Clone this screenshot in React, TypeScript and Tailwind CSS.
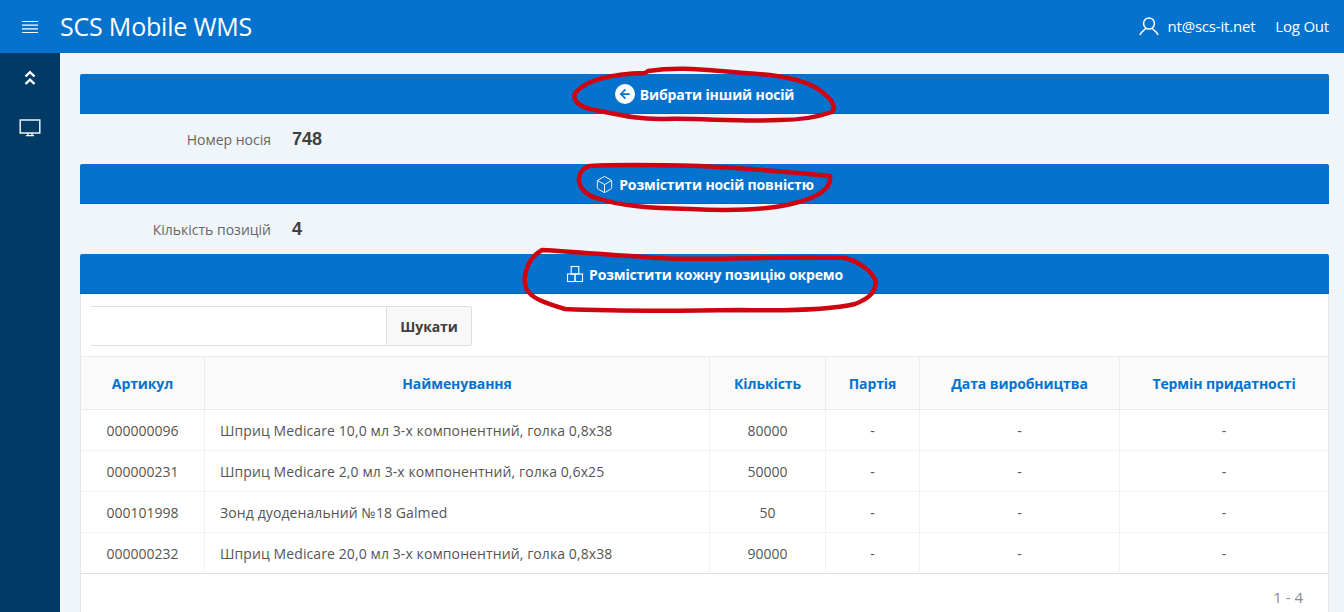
import { ArrowLeft, Box } from "lucide-react";

const ROWS = [
  { code: "000000096", name: "Шприц Medicare 10,0 мл 3-х компонентний, голка 0,8x38", qty: "80000" },
  { code: "000000231", name: "Шприц Medicare 2,0 мл 3-х компонентний, голка 0,6x25", qty: "50000" },
  { code: "000101998", name: "Зонд дуоденальний №18 Galmed", qty: "50" },
  { code: "000000232", name: "Шприц Medicare 20,0 мл 3-х компонентний, голка 0,8x38", qty: "90000" },
];

const HEADERS = [
  { label: "Артикул", w: "w-[123.5px]" },
  { label: "Найменування", w: "w-[505px]" },
  { label: "Кількість", w: "w-[116px]" },
  { label: "Партія", w: "w-[94px]" },
  { label: "Дата виробництва", w: "w-[200px]" },
  { label: "Термін придатності", w: "" },
];

function BlueBar({ icon, label }: { icon: React.ReactNode; label: string }) {
  return (
    <button className="flex h-10 w-full items-center justify-center gap-[5px] rounded-t-[2px] bg-[#0572ce] text-[14px] font-bold tracking-[-0.15px] text-white shadow-[inset_0_-1px_0_rgba(0,0,0,0.12)]">
      {icon}
      <span className="pt-[1px]">{label}</span>
    </button>
  );
}

function InfoRow({ label, value }: { label: string; value: string }) {
  return (
    <div className="flex h-[50px] items-center">
      <div className="w-[191px] text-right text-[14px] text-[#666]">{label}</div>
      <div className="ml-[21px] text-[18px] font-bold text-[#404040] [font-family:'Liberation_Sans',sans-serif]">{value}</div>
    </div>
  );
}

function HamburgerIcon() {
  return (
    <svg width="16" height="14" viewBox="0 0 16 14" fill="none" stroke="currentColor" strokeWidth="1.2">
      <path d="M0 1.5H16M0 5.2H16M0 8.9H16M0 12.5H16" />
    </svg>
  );
}

function UserIcon() {
  return (
    <svg width="20" height="19" viewBox="0 0 20 19" fill="none" stroke="currentColor" strokeWidth="1.5">
      <ellipse cx="10" cy="6.5" rx="5.4" ry="5.6" />
      <path d="M6.8 11C6.5 13.2 2 13.6 1 18M13.2 11C13.5 13.2 18 13.6 19 18" />
    </svg>
  );
}

function DoubleChevronIcon() {
  return (
    <svg width="12" height="16" viewBox="0 0 12 16" fill="none" stroke="currentColor" strokeWidth="2.4">
      <path d="M1.5 6.5L6 2.2L10.5 6.5M1.5 14L6 9.7L10.5 14" />
    </svg>
  );
}

function MonitorIcon() {
  return (
    <svg width="22" height="18" viewBox="0 0 22 18" fill="none" stroke="currentColor" strokeWidth="1.4">
      <rect x="1.2" y="1" width="19.6" height="13" />
      <path d="M7 16.6H15M9 14V16.6M13 14V16.6" />
    </svg>
  );
}

function BlocksIcon() {
  return (
    <svg width="18" height="18" viewBox="0 0 18 18" fill="none" stroke="currentColor" strokeWidth="1.1">
      <rect x="5.2" y="1.5" width="7.6" height="7.5" />
      <rect x="1.5" y="9" width="7.5" height="7.5" />
      <rect x="9" y="9" width="7.5" height="7.5" />
    </svg>
  );
}

export default function App() {
  return (
    <div className="relative flex h-[612px] flex-col overflow-hidden bg-[#f0f5fa] text-[14px] [font-family:'Open_Sans','Noto_Sans',sans-serif]">
      <header className="flex h-[53px] shrink-0 items-center bg-[#0572ce] text-white">
        <div className="flex w-[60px] justify-center">
          <HamburgerIcon />
        </div>
        <div className="text-[25px] leading-none tracking-[-0.2px]">SCS Mobile WMS</div>
        <div className="ml-auto flex items-center pr-[15px] text-[15px] tracking-[-0.2px]">
          <UserIcon />
          <span className="ml-[9px]">nt@scs-it.net</span>
          <span className="ml-[20px]">Log Out</span>
        </div>
      </header>

      <div className="flex min-h-0 flex-1">
        <aside className="flex w-[60px] shrink-0 flex-col items-center bg-[#023a66] pt-[17px] text-white">
          <DoubleChevronIcon />
          <div className="mt-[33px]">
            <MonitorIcon />
          </div>
        </aside>

        <main className="min-w-0 flex-1 pt-[21px] pl-[20px] pr-[15px]">
          <BlueBar
            label="Вибрати інший носій"
            icon={
              <span className="flex h-5 w-5 items-center justify-center rounded-full bg-white text-[#0572ce]">
                <ArrowLeft size={14} strokeWidth={3} />
              </span>
            }
          />
          <InfoRow label="Номер носія" value="748" />
          <BlueBar label="Розмістити носій повністю" icon={<Box size={19} strokeWidth={1.2} />} />
          <InfoRow label="Кількість позицій" value="4" />
          <BlueBar label="Розмістити кожну позицію окремо" icon={<BlocksIcon />} />

          <section className="border-x border-[#e6e6e6] bg-white">
            <div className="flex h-[62px] items-start pl-[10px] pt-[12px]">
              <input className="h-10 w-[295px] border-y border-[#dfdfdf] bg-white outline-none" />
              <button className="h-10 w-[86px] rounded-r-[2px] border border-[#dfdfdf] bg-[#f8f8f8] text-[14px] font-bold tracking-[-0.1px] text-[#404040]">
                Шукати
              </button>
            </div>
            <table className="w-full table-fixed border-collapse text-[14px] text-[#555]">
              <thead>
                <tr className="h-[53px] border-y border-[#ebebeb] bg-[#fafafa]">
                  {HEADERS.map((h, i) => (
                    <th
                      key={h.label}
                      className={`${h.w} ${i < 5 ? "border-r border-[#ebebeb]" : ""} text-center text-[14px] font-bold tracking-[-0.1px] text-[#0572ce]`}
                    >
                      {h.label}
                    </th>
                  ))}
                </tr>
              </thead>
              <tbody>
                {ROWS.map((r) => (
                  <tr key={r.code} className="h-[41px] border-b border-[#f2f2f2] last:border-[#dfdfdf]">
                    <td className="border-r border-[#f2f2f2] text-center">{r.code}</td>
                    <td className="border-r border-[#f2f2f2] pl-[15px] tracking-[0.1px] whitespace-nowrap">{r.name}</td>
                    <td className="border-r border-[#f2f2f2] text-center">{r.qty}</td>
                    <td className="border-r border-[#f2f2f2] text-center">-</td>
                    <td className="border-r border-[#f2f2f2] text-center">-</td>
                    <td className="text-center">-</td>
                  </tr>
                ))}
              </tbody>
            </table>
            <div className="flex h-[46px] items-center justify-end pr-[25px] text-[15px] text-[#8a8a8a]">1 - 4</div>
          </section>
        </main>
      </div>

      {/* red marker scribbles over the buttons */}
      <svg className="pointer-events-none absolute left-0 top-0" width="1344" height="612" fill="none" stroke="#cc0511" strokeWidth="4.5" strokeLinejoin="round">
        <path d="M648 71 C680 66 705 70 745 73 C775 75 805 78 822 92 C833 100 836 108 832 112 C815 118 800 120 780 120 C740 122 700 118 665 119 C640 120 620 115 590 109 C575 105 572 97 576 92 C585 82 605 74 645 73 Z" />
        <path d="M590 166 C620 164 660 165 700 166 C740 168 790 172 830 176 C832 190 815 198 795 203 C770 210 730 211 690 209 C650 208 620 206 600 199 C585 196 578 186 579 178 C580 171 585 167 590 166 Z" />
        <path d="M542 250 C580 252 620 256 660 258 C710 261 770 256 845 258 C860 262 873 272 876 282 C875 295 865 300 855 304 C830 310 790 311 740 310 C680 311 610 311 565 309 C545 303 530 298 526 288 C522 275 528 258 542 250 Z" />
      </svg>
    </div>
  );
}
